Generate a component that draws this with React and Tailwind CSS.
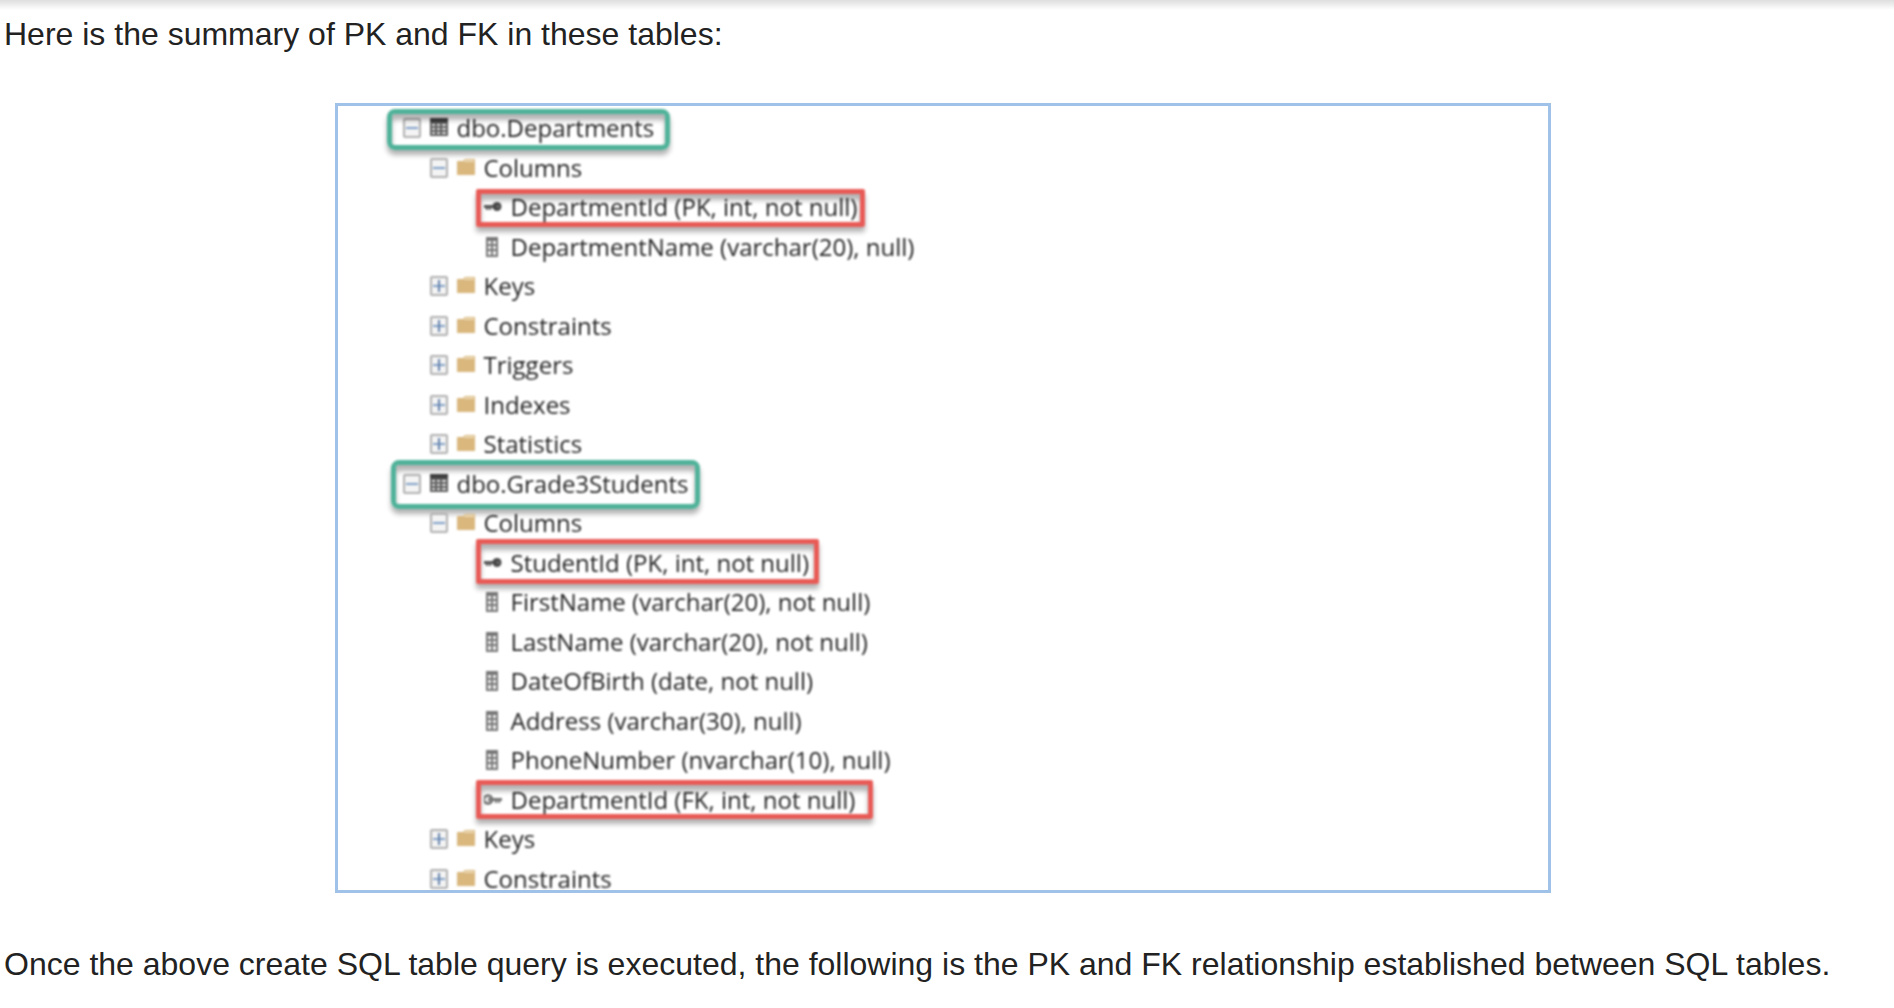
import React from 'react';
import clsx from 'clsx';

const rows = [
  { level: 0, icon: 'table', label: 'dbo.Departments', open: true, mark: 'green', box: '-inset-x-4 -bottom-0.5 top-px' },
  { level: 1, icon: 'folder', label: 'Columns', open: true },
  { level: 2, icon: 'primary', label: 'DepartmentId (PK, int, not null)', mark: 'red', box: '-inset-x-2 top-0.5 bottom-0' },
  { level: 2, icon: 'column', label: 'DepartmentName (varchar(20), null)' },
  { level: 1, icon: 'folder', label: 'Keys' },
  { level: 1, icon: 'folder', label: 'Constraints' },
  { level: 1, icon: 'folder', label: 'Triggers' },
  { level: 1, icon: 'folder', label: 'Indexes' },
  { level: 1, icon: 'folder', label: 'Statistics' },
  { level: 0, icon: 'table', label: 'dbo.Grade3Students', open: true, mark: 'green', box: '-inset-x-3 -top-1 -bottom-1.5' },
  { level: 1, icon: 'folder', label: 'Columns', open: true },
  { level: 2, icon: 'primary', label: 'StudentId (PK, int, not null)', mark: 'red', box: '-left-2 -right-2.5 -top-1 -bottom-0.5' },
  { level: 2, icon: 'column', label: 'FirstName (varchar(20), not null)' },
  { level: 2, icon: 'column', label: 'LastName (varchar(20), not null)' },
  { level: 2, icon: 'column', label: 'DateOfBirth (date, not null)' },
  { level: 2, icon: 'column', label: 'Address (varchar(30), null)' },
  { level: 2, icon: 'column', label: 'PhoneNumber (nvarchar(10), null)' },
  { level: 2, icon: 'foreign', label: 'DepartmentId (FK, int, not null)', mark: 'red', box: '-left-2 -right-4.5 inset-y-0' },
  { level: 1, icon: 'folder', label: 'Keys' },
  { level: 1, icon: 'folder', label: 'Constraints' },
];

const indents = ['pl-[65px]', 'pl-[92px]', 'pl-[146px]'];

const marks = {
  green: 'rounded-lg border-[#4fb299]',
  red: 'rounded-xs border-[#e85a56]',
};

function Icon({ name }) {
  return (
    <svg className="w-[18px] h-5 shrink-0" viewBox="0 0 18 20" fill="none" aria-hidden="true">
      {name === 'table' && (
        <>
          <path d="M0 0h18v18H0z" fill="#5c5c5c" />
          <path d="M0 0h18v4H0z" fill="#3d3d3d" />
          <path d="M2 6h3v2H2zM7 6h3v2H7zM12 6h4v2h-4zM2 10h3v2H2zM7 10h3v2H7zM12 10h4v2h-4zM2 14h3v2H2zM7 14h3v2H7zM12 14h4v2h-4z" fill="#e6e6e6" />
        </>
      )}
      {name === 'folder' && (
        <>
          <path d="M0 3h6l2-2h10v16H0z" fill="#d9b77d" />
          <path d="M8 2h9v2H7z" fill="#ecd9b6" />
        </>
      )}
      {name === 'column' && (
        <>
          <path d="M2 0h12v20H2z" fill="#777" />
          <path d="M4 4h3v3H4zM9 4h3v3H9zM4 9h3v3H4zM9 9h3v3H9zM4 14h3v4H4zM9 14h3v4H9z" fill="#f4f4f4" />
        </>
      )}
      {name === 'primary' && (
        <>
          <path d="M0 8h10v3H7v2H5v-2H4v2H2v-2H0z" fill="#555" />
          <circle cx="13" cy="9.5" r="4.5" fill="#484848" />
          <circle cx="14" cy="9.5" r="1" fill="#999" />
        </>
      )}
      {name === 'foreign' && (
        <>
          <circle cx="4" cy="9.5" r="4" stroke="#666" strokeWidth="2.5" />
          <path d="M4 8h14v3h-2v2h-2v-2h-1v2h-2v-2H4z" fill="#777" />
        </>
      )}
    </svg>
  );
}

function Toggle({ open, label }) {
  return (
    <button type="button" aria-expanded={!!open} aria-label={`Toggle ${label}`} className="shrink-0">
      <svg className="block w-[18px] h-5" viewBox="0 0 18 20" fill="none">
        <rect x="1" y="1" width="16" height="18" rx="1" fill="#f4f4f4" stroke="#b0b0b0" strokeWidth="2" />
        <path d="M3 10h12" stroke="#7f9fc6" strokeWidth="2" />
        {!open && <path d="M9 4v12" stroke="#6382ab" strokeWidth="2" />}
      </svg>
    </button>
  );
}

function TreeRow({ row }) {
  return (
    <li className={clsx('flex odd:h-10 even:h-[39px]', indents[row.level])}>
      <div className="relative flex items-center gap-[9px]">
        {row.mark && (
          <span
            className={clsx(
              'absolute border-5 shadow-[0_5px_5px_rgba(0,0,0,0.3),inset_0_6px_5px_rgba(0,0,0,0.3)]',
              marks[row.mark],
              row.box
            )}
          />
        )}
        {row.level < 2 && <Toggle open={row.open} label={row.label} />}
        <Icon name={row.icon} />
        <span className="whitespace-nowrap">{row.label}</span>
      </div>
    </li>
  );
}

function App() {
  return (
    <main className="min-h-screen bg-white bg-linear-to-b from-[#dedede] to-white to-[10px] pl-1 pr-[13px] pt-4 font-['Liberation_Sans',Arial,sans-serif] text-[32px] leading-9 text-[#222]">
      <p>Here is the summary of PK and FK in these tables:</p>

      <figure className="mx-auto mt-[51px] w-full max-w-[1216px] border-3 border-[#a0c1e8] bg-white pt-0.5 font-['Open_Sans','Segoe_UI',sans-serif] text-2xl text-[#222]">
        <ul className="-mb-2 blur-[1px]">
          {rows.map((row, i) => (
            <TreeRow key={i} row={row} />
          ))}
        </ul>
      </figure>

      <p className="mt-[53px]">
        Once the above create SQL table query is executed, the following is the PK and FK relationship established between SQL tables.
      </p>
    </main>
  );
}

export default App;
